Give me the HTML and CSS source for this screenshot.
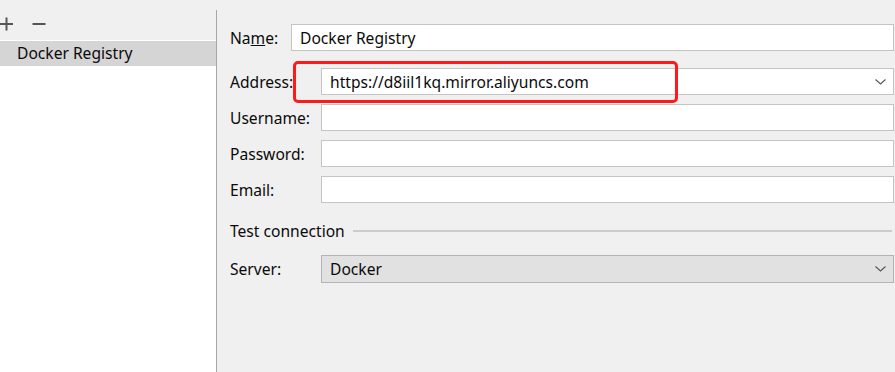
FILE: index.html
```html
<!DOCTYPE html>
<html lang="en">
<head>
    <meta charset="UTF-8">
    <title>Docker Registry</title>
    <link rel="stylesheet" href="styles.css">
</head>
<body>
    <div class="window">
        <div class="side">
            <div class="toolbar">
                <svg class="tool" width="14" height="14" viewBox="0 0 14 14"><path d="M0 7 H13 M6.5 0.5 V13.5" stroke="#555" stroke-width="2"/></svg>
                <svg class="tool" width="14" height="14" viewBox="0 0 14 14"><path d="M0.5 7 H13.5" stroke="#555" stroke-width="2"/></svg>
            </div>
            <ul class="list">
                <li class="list-item selected">Docker Registry</li>
            </ul>
        </div>
        <div class="divider"></div>
        <div class="main">
            <div class="row row-name">
                <label class="label label-short">Na<u>m</u>e:</label>
                <div class="field">Docker Registry</div>
            </div>
            <div class="row row-address">
                <label class="label">Address:</label>
                <div class="field combo">
                    <span>https://d8iil1kq.mirror.aliyuncs.com</span>
                    <svg class="chevron" width="11" height="6" viewBox="0 0 11 6"><path d="M0.5 0.5 L5.5 5 L10.5 0.5" fill="none" stroke="#555" stroke-width="1.1"/></svg>
                </div>
                <div class="highlight"></div>
            </div>
            <div class="row">
                <label class="label">Username:</label>
                <div class="field"></div>
            </div>
            <div class="row">
                <label class="label">Password:</label>
                <div class="field"></div>
            </div>
            <div class="row">
                <label class="label">Email:</label>
                <div class="field"></div>
            </div>
            <div class="section">
                <span class="section-title">Test connection</span>
                <span class="section-line"></span>
            </div>
            <div class="row">
                <label class="label">Server:</label>
                <div class="field combo select">
                    <span>Docker</span>
                    <svg class="chevron" width="11" height="6" viewBox="0 0 11 6"><path d="M0.5 0.5 L5.5 5 L10.5 0.5" fill="none" stroke="#555" stroke-width="1.1"/></svg>
                </div>
            </div>
        </div>
    </div>
</body>
</html>
```

FILE: styles.css
```css
:root {
    --panel-bg: #f0f0f0;
    --field-border: #c4c4c4;
    --text-color: #0a0a0a;
}

body, html {
    margin: 0;
    padding: 0;
    height: 100%;
    background-color: var(--panel-bg);
    font-family: 'Noto Sans', 'Open Sans', sans-serif;
    font-size: 15.6px;
    color: var(--text-color);
    overflow: hidden;
}

.window {
    display: flex;
    height: 372px;
}

.side {
    width: 216px;
    display: flex;
    flex-direction: column;
}

.toolbar {
    height: 40px;
    display: flex;
    align-items: center;
    gap: 18px;
    box-sizing: border-box;
    padding-top: 8px;
}

.tool {
    display: block;
}

.list {
    flex: 1;
    margin: 0;
    padding: 1px 0 0 0;
    list-style: none;
    background-color: #ffffff;
}

.list-item {
    height: 25px;
    line-height: 25px;
    padding-left: 17px;
}

.list-item.selected {
    background-color: #d5d5d5;
}

.divider {
    width: 1px;
    margin-top: 10px;
    background-color: #a8a8a8;
}

.main {
    flex: 1;
    padding: 24px 1px 0 13px;
    display: flex;
    flex-direction: column;
    gap: 9px;
}

.row {
    position: relative;
    display: flex;
    align-items: center;
    height: 27px;
}

.row-name {
    margin-bottom: 8px;
}

.label {
    width: 91px;
    flex-shrink: 0;
}

.label-short {
    width: 61px;
}

.field {
    flex: 1;
    height: 27px;
    box-sizing: border-box;
    background-color: #ffffff;
    border: 1px solid var(--field-border);
    padding: 0 8px;
    display: flex;
    align-items: center;
}

.combo {
    justify-content: space-between;
    padding-right: 7px;
}

.select {
    height: 28px;
    background-color: #e1e1e1;
    border-color: #b4b4b4;
}

.chevron {
    flex-shrink: 0;
    margin-top: 1px;
}

.highlight {
    position: absolute;
    left: 63px;
    top: -7px;
    width: 385px;
    height: 42px;
    box-sizing: border-box;
    border: 3px solid #ff1a1a;
    border-radius: 5px;
}

.section {
    display: flex;
    align-items: center;
    height: 20px;
    margin-top: 9px;
    margin-bottom: 5px;
}

.section-title {
    margin-right: 8px;
}

.section-line {
    flex: 1;
    height: 2px;
    background-color: #cccccc;
    margin-right: 2px;
}
```
